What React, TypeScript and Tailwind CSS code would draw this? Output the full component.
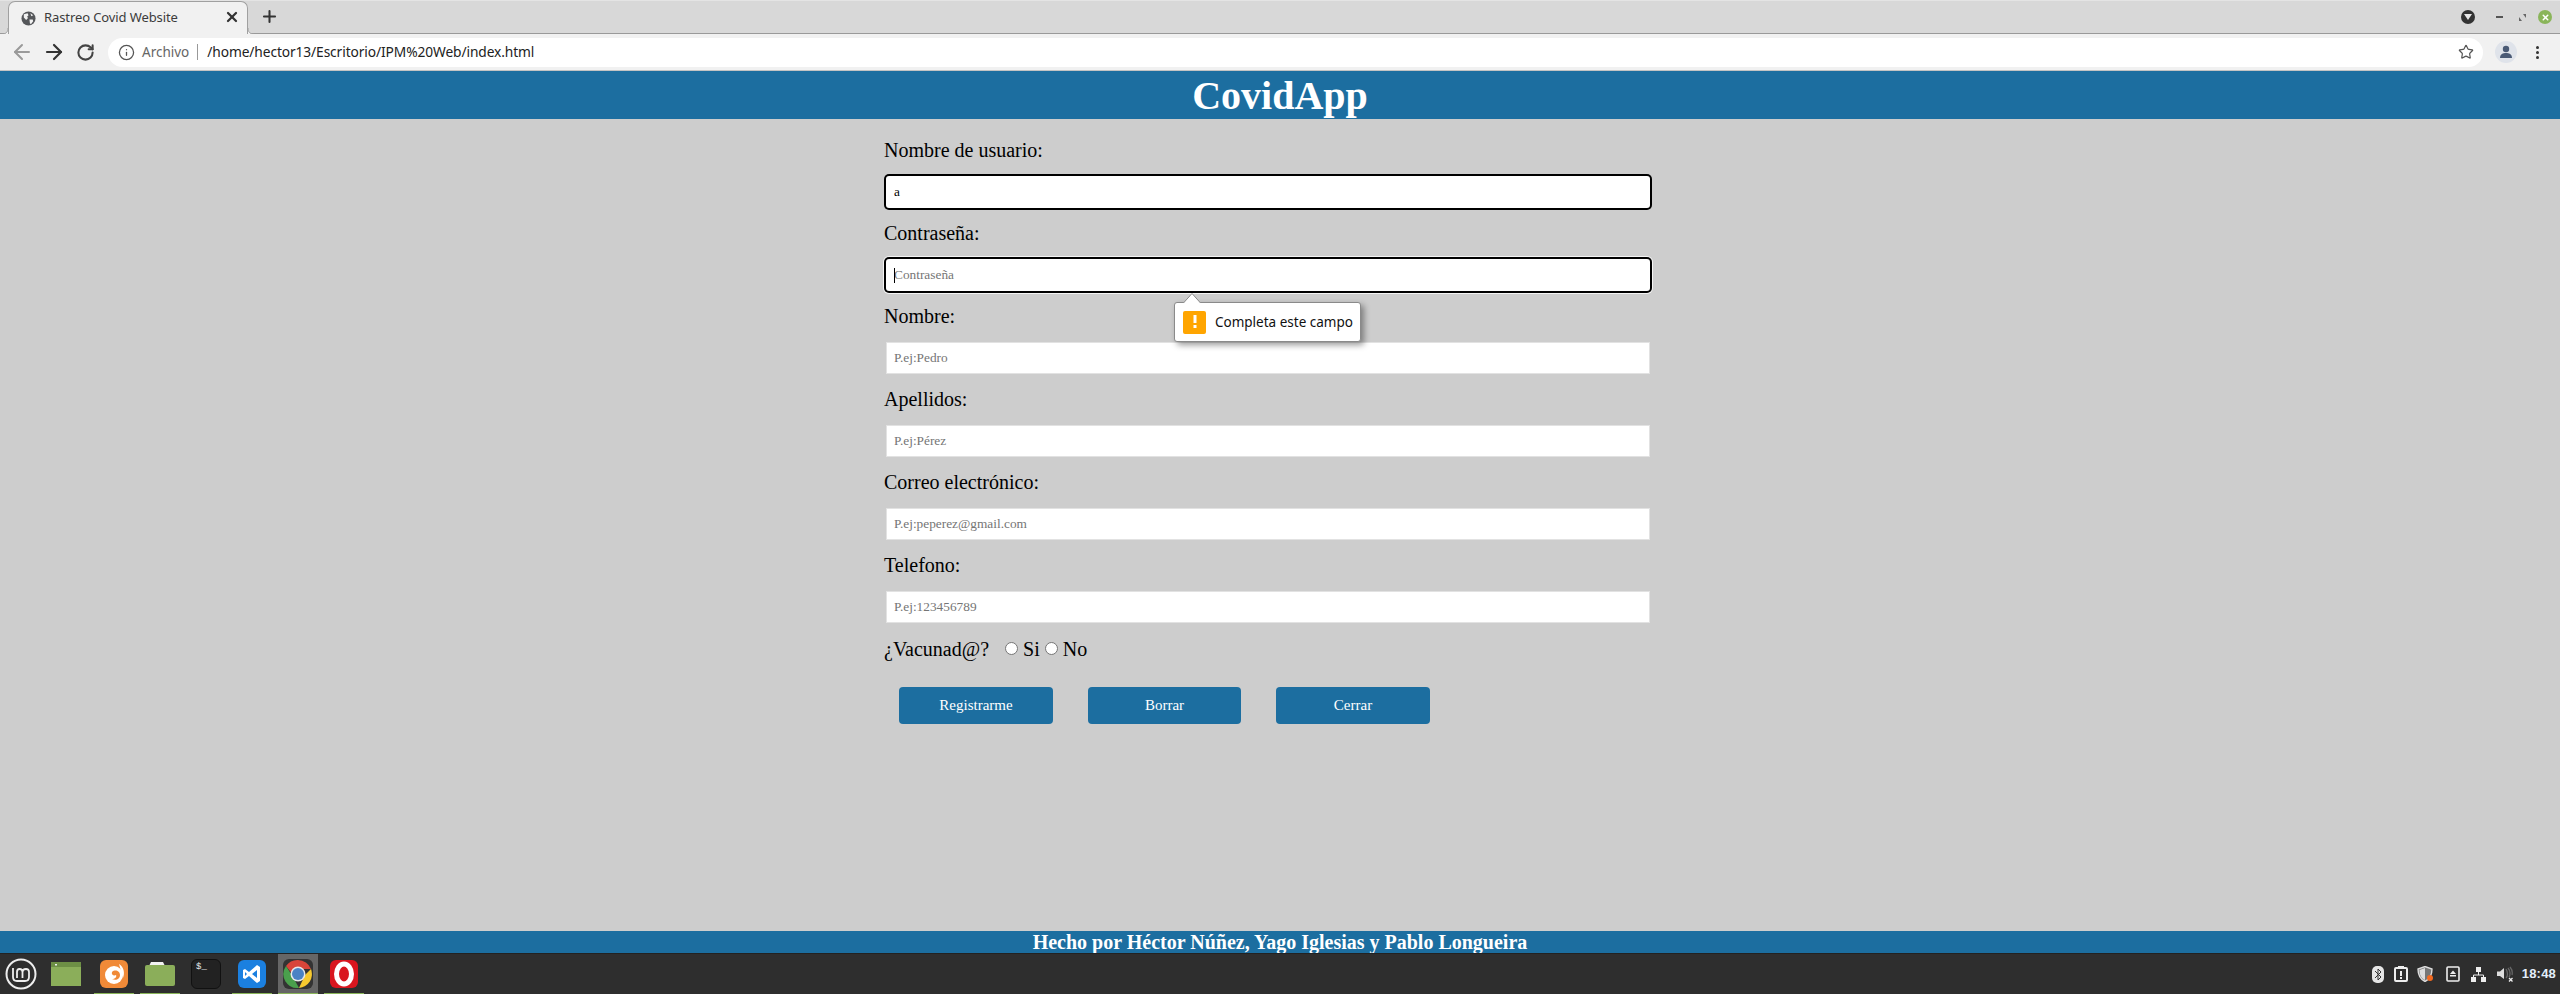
import React from "react";
import { ArrowLeft, ArrowRight, RotateCw, Info, Star, X, Plus } from "lucide-react";

const serif = "font-['Liberation_Serif',serif]";

function Field({ label, placeholder, value, focused, caret, halo }: { label: string; placeholder: string; value?: string; focused?: boolean; caret?: boolean; halo?: boolean }) {
  const cls = focused
    ? halo
      ? "pl-[8px] rounded-[3px] shadow-[0_0_0_2px_#000,0_0_0_3px_#f4f4f4]"
      : "pl-[8px] rounded-[3px] shadow-[0_0_0_2px_#000]"
    : "pl-[7px] border border-[#e2e2e2]";
  return (
    <div className="h-[83px] flex flex-col">
      <label className="h-[42px] pt-[4px] text-[20px] leading-[24px] text-black">{label}</label>
      <div className="relative ml-[2px] h-[32px] w-[764px]">
        <input
          readOnly
          value={value}
          placeholder={placeholder}
          className={`w-full h-full bg-white text-[13.33px] text-black placeholder:text-[#757575] outline-none ${serif} ${cls}`}
        />
        {caret && <span className="absolute left-[8px] top-[9px] h-[15px] w-[1px] bg-black" />}
      </div>
    </div>
  );
}

function Tooltip() {
  return (
    <div className="absolute left-[290px] top-[168px] w-[187px] h-[40px] bg-white border border-[#8a8a8a] rounded-[3px] shadow-[3px_3px_6px_rgba(0,0,0,0.4)] flex items-center pl-[8px] gap-[9px] font-['Noto_Sans',sans-serif] text-[13.5px] text-[#111]">
      <svg className="absolute -top-[10px] left-[7px]" width="20" height="10" viewBox="0 0 20 10">
        <path d="M1 10.5 L10 0.5 L19 10.5" fill="#fff" stroke="#8a8a8a" />
      </svg>
      <span className="w-[23px] h-[23px] bg-[#ffa500] rounded-[2px] flex items-center justify-center">
        <svg width="8" height="16" viewBox="0 0 8 16"><rect x="2.5" y="1" width="3" height="8" fill="#fff" /><rect x="2.5" y="11" width="3" height="3" fill="#fff" /></svg>
      </span>
      <span>Completa este campo</span>
    </div>
  );
}

function Radio() {
  return <span className="block w-[13px] h-[13px] rounded-full bg-white border border-[#767676]" />;
}

function Btn({ children, className = "" }: { children: React.ReactNode; className?: string }) {
  return (
    <button className={`h-[37px] rounded-[4px] bg-[#1c6ea0] text-white text-[15px] ${serif} ${className}`}>{children}</button>
  );
}

function ChromeBar() {
  return (
    <>
      <div className="h-[34px] bg-[#d8d8d8] border-t border-[#e4e4e4] border-b border-b-[#999] flex items-end relative font-['Noto_Sans',sans-serif]">
        <div className="ml-[8px] w-[240px] h-[33px] bg-[#f1f1f1] border border-[#a0a0a0] border-b-0 rounded-t-[7px] flex items-center pl-[12px] relative -mb-[1px]">
          <svg width="15" height="15" viewBox="0 0 16 16">
            <circle cx="8" cy="8" r="7.5" fill="#55575a" />
            <path d="M3 3.5 L7 2.5 L8 4.5 L6.5 6 L7.5 7.5 L5.5 9.5 L3 7 Z M9 9 L12.5 9 L13 11 L10.5 14 L9.5 13 Z M10 2.5 L13 4.5 L11 5.5 Z" fill="#f1f1f1" />
          </svg>
          <span className="ml-[8px] text-[13px] text-[#3c3c3c] tracking-[-0.1px] whitespace-nowrap">Rastreo Covid Website</span>
          <X size={16} strokeWidth={3.4} className="absolute left-[215px] top-[7px] text-[#333]" />
          <svg className="absolute -right-[7px] bottom-0" width="6" height="6" viewBox="0 0 6 6"><path d="M0 0 C0 4 2 6 6 6 H0 Z" fill="#f1f1f1" /><path d="M0 0 C0 4 2 6 6 6" fill="none" stroke="#a0a0a0" /></svg>
          <svg className="absolute -left-[7px] bottom-0" width="6" height="6" viewBox="0 0 6 6"><path d="M6 0 C6 4 4 6 0 6 H6 Z" fill="#f1f1f1" /><path d="M6 0 C6 4 4 6 0 6" fill="none" stroke="#a0a0a0" /></svg>
        </div>
        <Plus size={19} strokeWidth={2.6} className="ml-[12px] mb-[7px] text-[#333]" />
        <div className="ml-auto flex items-center h-[32px] pr-[8px]">
          <span className="w-[14px] h-[14px] rounded-full bg-[#333] flex items-center justify-center mr-[21px]">
            <svg width="8" height="6" viewBox="0 0 8 6"><path d="M0 0 H8 L4 6 Z" fill="#e8e8e8" /></svg>
          </span>
          <span className="w-[7px] h-[2px] bg-[#555] mr-[16px]" />
          <svg className="mr-[12px]" width="7" height="7" viewBox="0 0 7 7"><path d="M0 7 V3 L3 7 Z M7 0 V4 L4 0 Z" fill="#666" /></svg>
          <span className="w-[14px] h-[14px] rounded-full bg-[#8ab55a] flex items-center justify-center">
            <X size={9} strokeWidth={4} className="text-white" />
          </span>
        </div>
      </div>
      <div className="h-[37px] bg-[#f1f1f1] flex items-center relative border-b border-[#c4c4c4] font-['Noto_Sans',sans-serif]">
        <ArrowLeft size={24} strokeWidth={2} className="ml-[10px] text-[#9a9a9a]" />
        <ArrowRight size={24} strokeWidth={2.2} className="ml-[8px] text-[#333]" />
        <RotateCw size={19} strokeWidth={2.6} className="ml-[10px] text-[#444]" />
        <div className="ml-[13px] w-[2375px] h-[29px] bg-white rounded-full flex items-center pl-[10px]">
          <Info size={17} strokeWidth={1.8} className="text-[#555]" />
          <span className="ml-[7px] text-[13.5px] text-[#666]">Archivo</span>
          <span className="ml-[8px] h-[16px] w-[1px] bg-[#999]" />
          <span className="ml-[9px] text-[13.75px] text-[#222] tracking-[-0.1px]">/home/hector13/Escritorio/IPM%20Web/index.html</span>
          <Star size={16} strokeWidth={1.8} className="ml-auto mr-[9px] text-[#555]" />
        </div>
        <span className="ml-[12px] w-[22px] h-[22px] rounded-full bg-[#dfe3ea] flex items-center justify-center">
          <svg width="14" height="14" viewBox="0 0 14 14"><circle cx="7" cy="4" r="3.2" fill="#4a5a75" /><path d="M1 13 C1 9 4 8 7 8 C10 8 13 9 13 13 Z" fill="#4a5a75" /></svg>
        </span>
        <span className="ml-[19px] flex flex-col gap-[2px]">
          <span className="w-[3px] h-[3px] rounded-full bg-[#333]" />
          <span className="w-[3px] h-[3px] rounded-full bg-[#333]" />
          <span className="w-[3px] h-[3px] rounded-full bg-[#333]" />
        </span>
      </div>
    </>
  );
}

function Dock({ active, running, children }: { active?: boolean; running?: boolean; children: React.ReactNode }) {
  return (
    <div className={`relative w-[40px] h-[41px] flex items-center justify-center ${active ? "bg-[#666]" : ""}`}>
      {children}
      {running && <span className="absolute left-0 right-0 bottom-0 h-[2px] bg-[#8ab55a]" />}
    </div>
  );
}

function Taskbar() {
  return (
    <div className="h-[41px] bg-[#2e2e2e] border-t border-[#222] flex items-center font-['Liberation_Sans',sans-serif]">
      <svg className="ml-[5px]" width="32" height="32" viewBox="0 0 32 32" fill="none" stroke="#eee">
        <circle cx="16" cy="16" r="14.5" strokeWidth="2" />
        <path d="M8 10 V19 C8 22 10 23 12 23 H20 C23 23 24 21 24 19 V14 C24 12 22.5 11 21 11 C19 11 17.5 12 17.5 14 V20 M17.5 14 C17.5 12 16 11 14.5 11 C13 11 12 12 12 14 V20" strokeWidth="1.8" />
      </svg>
      <svg className="ml-[14px]" width="30" height="24" viewBox="0 0 30 24">
        <rect width="30" height="24" fill="#8bae5a" />
        <rect width="30" height="5" fill="#6d8f45" />
        <rect x="4" y="2" width="2" height="1.5" fill="#eee" />
      </svg>
      <div className="ml-[13px] flex gap-[6px]">
        <Dock running>
          <svg width="28" height="28" viewBox="0 0 28 28">
            <rect width="28" height="28" rx="6" fill="#f08a38" />
            <circle cx="14" cy="15" r="9" fill="#fff" />
            <path d="M12 12 C15 9 20 11 20 15 C20 19 16 21 12 19 C15 19 17 17 16 15 C14 16 11 15 12 12 Z" fill="#f08a38" />
            <path d="M19 4 C24 7 25 13 23 18 C22 13 20 8 19 4 Z" fill="#fff" />
          </svg>
        </Dock>
        <Dock running>
          <svg width="30" height="24" viewBox="0 0 30 24">
            <path d="M4 4 L6 0 H18 L20 4 Z" fill="#f2f2f2" />
            <rect y="3" width="30" height="21" rx="2" fill="#8bae5a" />
          </svg>
        </Dock>
        <Dock>
          <span className="w-[30px] h-[30px] bg-[#222] border border-[#111] rounded-[6px] relative block font-['Liberation_Mono',monospace] text-[#eee] text-[9px] leading-none">
            <span className="absolute left-[4px] top-[3px]">$_</span>
          </span>
        </Dock>
        <Dock running>
          <svg width="28" height="28" viewBox="0 0 28 28">
            <rect width="28" height="28" rx="6" fill="#1b80e0" />
            <path d="M19 5 L22 7 V21 L19 23 L11 16 L7 19 L5 18 V10 L7 9 L11 12 Z M19 10 L14 14 L19 18 Z M7 12 V16 L9 14 Z" fill="#fff" fillRule="evenodd" />
          </svg>
        </Dock>
        <Dock active running>
          <svg width="30" height="30" viewBox="0 0 30 30">
            <rect width="30" height="30" rx="6" fill="#333" />
            <path d="M15 1 A14 14 0 0 1 28 10 H15 Z M3 7 A14 14 0 0 1 15 1 V10 L10 16 Z" fill="#d8453a" />
            <path d="M28 10 A14 14 0 0 1 16 29 L22 16 Z" fill="#f6c92f" />
            <path d="M16 29 A14 14 0 0 1 3 7 L10 18 Z" fill="#4aa04c" />
            <circle cx="15" cy="15" r="7.5" fill="#e8e8e8" />
            <circle cx="15" cy="15" r="6" fill="#4a82c4" />
          </svg>
        </Dock>
        <Dock running>
          <svg width="28" height="28" viewBox="0 0 28 28">
            <rect width="28" height="28" rx="6" fill="#d9161f" />
            <ellipse cx="14" cy="14" rx="7.5" ry="10" fill="none" stroke="#fff" strokeWidth="5" />
          </svg>
        </Dock>
      </div>
      <div className="ml-auto flex items-center">
        <svg width="12" height="17" viewBox="0 0 12 17">
          <rect width="12" height="17" rx="5" fill="#e6e6e6" />
          <path d="M3 5 L9 11 L6 14 V3 L9 6 L3 12" fill="none" stroke="#333" />
        </svg>
        <svg className="ml-[10px]" width="14" height="16" viewBox="0 0 14 16">
          <rect x="1" y="2" width="12" height="13" rx="1" fill="none" stroke="#eee" strokeWidth="2" />
          <rect x="4" y="0" width="6" height="3" fill="#eee" />
          <rect x="6" y="5" width="2" height="5" fill="#eee" />
          <rect x="6" y="11" width="2" height="2" fill="#eee" />
        </svg>
        <svg className="ml-[9px]" width="17" height="16" viewBox="0 0 17 16">
          <path d="M8 0.5 L15 3 C15 9 13 13 8 15.5 C3 13 1 9 1 3 Z" fill="#777" stroke="#ddd" strokeWidth="1.4" />
          <path d="M8 2 V14 C3.5 12 2.5 8 2.5 4 Z" fill="#ddd" />
          <circle cx="13" cy="12" r="3" fill="#f26a21" />
        </svg>
        <svg className="ml-[12px]" width="14" height="16" viewBox="0 0 14 16">
          <rect x="1" y="1" width="12" height="14" rx="1" fill="none" stroke="#eee" strokeWidth="1.6" />
          <path d="M7 4.5 L10 8 H4 Z" fill="#eee" />
          <rect x="4" y="9" width="6" height="1.5" fill="#eee" />
        </svg>
        <svg className="ml-[11px]" width="15" height="15" viewBox="0 0 15 15">
          <rect x="5" y="0" width="5" height="5" fill="#eee" />
          <rect x="0" y="10" width="5" height="5" fill="#eee" />
          <rect x="10" y="10" width="5" height="5" fill="#eee" />
          <path d="M7.5 5 V8 M2.5 10 V8 H12.5 V10" fill="none" stroke="#eee" />
        </svg>
        <svg className="ml-[11px]" width="16" height="16" viewBox="0 0 16 16">
          <path d="M0 5.5 H3 L7 2 V13 L3 10 H0 Z" fill="#ddd" />
          <path d="M9 3 C11 6 11 10 9 12 M11 2 C13.5 5 13.5 9 12 11 M13 1 C15.5 4 15.5 7 15 9" fill="none" stroke="#666" strokeWidth="1.3" />
          <path d="M12 12 L15.5 15.5 M15.5 12 L12 15.5" stroke="#eee" strokeWidth="1.3" />
        </svg>
        <span className="ml-[9px] mr-[4px] text-[13px] font-bold text-[#e3eefa] tracking-[0.2px]">18:48</span>
      </div>
    </div>
  );
}

export default function App() {
  return (
    <div className={`w-[2560px] h-[994px] flex flex-col overflow-hidden bg-[#cdcdcd] ${serif}`}>
      <ChromeBar />
      <header className="h-[48px] bg-[#1c6ea0] text-white text-center text-[40px] leading-[48px] font-bold pt-[1px]">CovidApp</header>
      <main className="flex-1 pt-[15px]">
        <form className="relative ml-[884px] w-[768px]">
          <Field label="Nombre de usuario:" placeholder="" value="a" focused />
          <Field label="Contraseña:" placeholder="Contraseña" focused caret halo />
          <Field label="Nombre:" placeholder="P.ej:Pedro" />
          <Field label="Apellidos:" placeholder="P.ej:Pérez" />
          <Field label="Correo electrónico:" placeholder="P.ej:peperez@gmail.com" />
          <Field label="Telefono:" placeholder="P.ej:123456789" />
          <div className="h-[33px] flex items-center text-[20px] text-black">
            <span>¿Vacunad@?</span>
            <span className="ml-[16px]"><Radio /></span>
            <span className="ml-[5px]">Si</span>
            <span className="ml-[5px]"><Radio /></span>
            <span className="ml-[5px]">No</span>
          </div>
          <div className="flex gap-[35px] ml-[15px] mt-[22px]">
            <Btn className="w-[154px]">Registrarme</Btn>
            <Btn className="w-[153px]">Borrar</Btn>
            <Btn className="w-[154px]">Cerrar</Btn>
          </div>
          <Tooltip />
        </form>
      </main>
      <footer className="h-[22px] bg-[#1c6ea0] text-white text-center text-[20px] leading-[22px] font-bold">Hecho por Héctor Núñez, Yago Iglesias y Pablo Longueira</footer>
      <Taskbar />
    </div>
  );
}
